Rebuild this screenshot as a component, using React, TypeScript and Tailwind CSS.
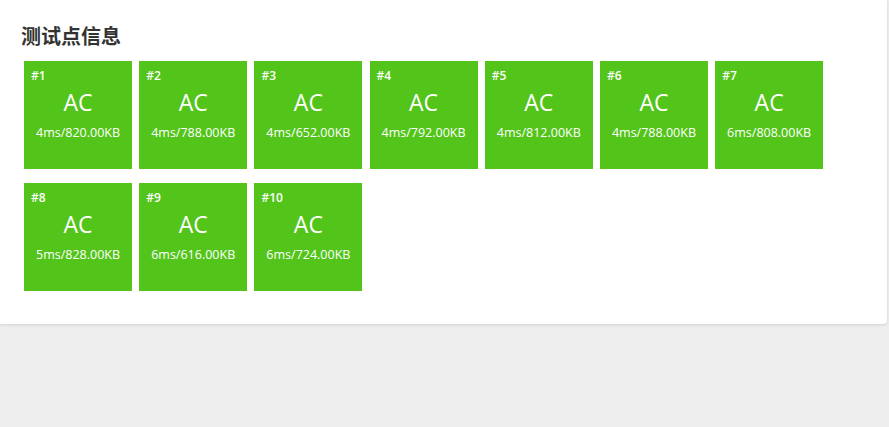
import React from 'react';

type TestCase = { id: number; status: string; time: string; memory: string };

const cases: TestCase[] = [
  { id: 1, status: 'AC', time: '4ms', memory: '820.00KB' },
  { id: 2, status: 'AC', time: '4ms', memory: '788.00KB' },
  { id: 3, status: 'AC', time: '4ms', memory: '652.00KB' },
  { id: 4, status: 'AC', time: '4ms', memory: '792.00KB' },
  { id: 5, status: 'AC', time: '4ms', memory: '812.00KB' },
  { id: 6, status: 'AC', time: '4ms', memory: '788.00KB' },
  { id: 7, status: 'AC', time: '6ms', memory: '808.00KB' },
  { id: 8, status: 'AC', time: '5ms', memory: '828.00KB' },
  { id: 9, status: 'AC', time: '6ms', memory: '616.00KB' },
  { id: 10, status: 'AC', time: '6ms', memory: '724.00KB' },
];

export default function App() {
  return (
    <div
      className="min-h-[427px] w-full bg-[#eeeeee]"
      style={{ fontFamily: '"Open Sans", "Noto Sans CJK SC", sans-serif' }}
    >
      <section className="w-[887px] bg-white rounded-br-[4px] shadow-[0_1px_3px_rgba(0,0,0,0.12)] pt-[23px] pb-[33px]">
        <h2 className="pl-[21px] text-[20px] leading-[28px] font-bold text-[#333333]">
          测试点信息
        </h2>
        <div className="mt-[10px] pl-[24px] pr-[20px] flex flex-wrap gap-x-[7.2px] gap-y-[14px]">
          {cases.map((c) => (
            <div
              key={c.id}
              className="w-[108px] h-[108px] bg-[#52c41a] text-white flex flex-col"
            >
              <div className="pl-[7px] pt-[7px] text-[12px] leading-[16px] font-semibold">
                #{c.id}
              </div>
              <div className="mt-[2px] text-center text-[23px] leading-[32px]">
                {c.status}
              </div>
              <div className="mt-[6px] text-center text-[12.5px] leading-[18px]">
                {c.time}/{c.memory}
              </div>
            </div>
          ))}
        </div>
      </section>
    </div>
  );
}
